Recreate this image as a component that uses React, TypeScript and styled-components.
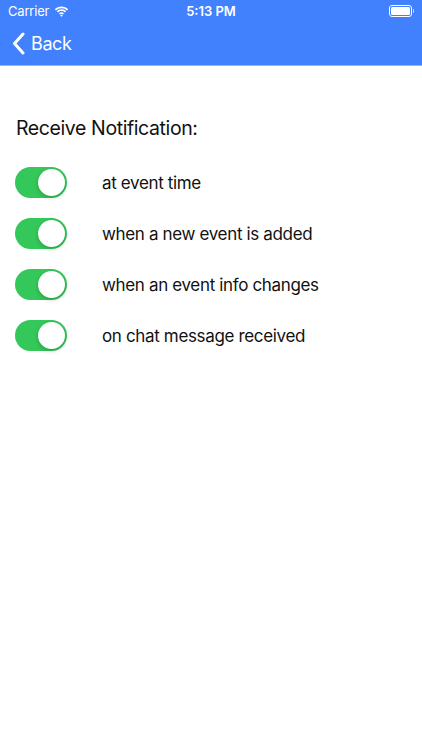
import React, { useState } from "react";
import styled, { createGlobalStyle } from "styled-components";

const GlobalStyle = createGlobalStyle`
  html, body {
    margin: 0;
    padding: 0;
    background: #fff;
  }
  body {
    font-family: "Inter", "Liberation Sans", Arial, sans-serif;
    -webkit-font-smoothing: antialiased;
  }
`;

const Page = styled.div`
  width: 422px;
  min-height: 750px;
  background: #fff;
`;

const Header = styled.div`
  background: #4181fd;
  border-bottom: 1px solid #8fb5fb;
  color: #fff;
`;

const StatusBar = styled.div`
  display: grid;
  grid-template-columns: 1fr auto 1fr;
  align-items: center;
  height: 22px;
  padding: 0 8px;
  font-size: 13px;
`;

const Carrier = styled.div`
  display: flex;
  align-items: center;
  gap: 5px;
  letter-spacing: -0.2px;
`;

const Clock = styled.div`
  font-weight: 600;
  font-size: 13px;
`;

const Battery = styled.div`
  justify-self: end;
  display: flex;
  align-items: center;
`;

const BatteryBody = styled.div`
  width: 19px;
  height: 8px;
  border: 1px solid #fff;
  border-radius: 3px;
  padding: 1px;
  box-sizing: content-box;
  span {
    display: block;
    width: 100%;
    height: 100%;
    background: #fff;
    border-radius: 1.5px;
  }
`;

const BatteryTip = styled.div`
  width: 1.5px;
  height: 4px;
  background: rgba(255, 255, 255, 0.7);
  margin-left: 1px;
  border-radius: 0 1px 1px 0;
`;

const NavBar = styled.div`
  height: 43px;
  display: flex;
  align-items: center;
  padding-left: 12px;
`;

const BackButton = styled.button`
  display: flex;
  align-items: center;
  gap: 6px;
  background: none;
  border: none;
  color: #fff;
  font-family: inherit;
  font-size: 18px;
  letter-spacing: -0.4px;
  padding: 0;
  cursor: pointer;
`;

const Content = styled.div`
  padding: 50px 15px 0;
`;

const Title = styled.div`
  font-size: 19.5px;
  letter-spacing: -0.4px;
  color: #111;
  margin-left: 1px;
  margin-bottom: 27px;
`;

const List = styled.div`
  display: flex;
  flex-direction: column;
  gap: 20px;
`;

const Row = styled.label`
  display: flex;
  align-items: center;
  gap: 35px;
  font-size: 17px;
  letter-spacing: -0.35px;
  color: #111;
`;

const Track = styled.button<{ $on: boolean }>`
  position: relative;
  width: 52px;
  height: 31px;
  border-radius: 16px;
  border: none;
  padding: 0;
  background: ${(p) => (p.$on ? "#34c759" : "#e5e5ea")};
  cursor: pointer;
  flex-shrink: 0;
`;

const Knob = styled.span<{ $on: boolean }>`
  position: absolute;
  top: 2px;
  left: ${(p) => (p.$on ? "23px" : "2px")};
  width: 27px;
  height: 27px;
  border-radius: 50%;
  background: #fff;
  box-shadow: 0 2px 4px rgba(0, 0, 0, 0.18), 0 0 1px rgba(0, 0, 0, 0.1);
`;

const Wifi = () => (
  <svg width="15" height="11" viewBox="0 0 15 11" fill="#fff">
    <path d="M7.5 2.2c2.1 0 4 .8 5.5 2.2l1.2-1.2C12.4 1.4 10 .4 7.5.4S2.6 1.4.8 3.2L2 4.4c1.5-1.4 3.4-2.2 5.5-2.2z" />
    <path d="M7.5 5.1c1.3 0 2.5.5 3.4 1.3l1.2-1.2C10.9 4 9.3 3.3 7.5 3.3S4.1 4 2.9 5.2l1.2 1.2c.9-.8 2.1-1.3 3.4-1.3z" />
    <path d="M7.5 8c.5 0 1 .2 1.3.5l1.2-1.2c-.7-.6-1.6-1-2.5-1s-1.8.4-2.5 1l1.2 1.2c.3-.3.8-.5 1.3-.5zM7.5 10.8l1.3-1.3c-.7-.6-1.9-.6-2.6 0z" />
  </svg>
);

const Chevron = () => (
  <svg width="13" height="23" viewBox="0 0 13 23" fill="none">
    <path d="M11 2L2.5 11.5 11 21" stroke="#fff" strokeWidth="3" strokeLinecap="round" strokeLinejoin="round" />
  </svg>
);

const items = [
  "at event time",
  "when a new event is added",
  "when an event info changes",
  "on chat message received",
];

export default function App() {
  const [flags, setFlags] = useState<boolean[]>([true, true, true, true]);

  const toggle = (i: number) => {
    setFlags((f) => f.map((v, j) => (j === i ? !v : v)));
  };

  return (
    <Page>
      <GlobalStyle />
      <Header>
        <StatusBar>
          <Carrier>
            Carrier <Wifi />
          </Carrier>
          <Clock>5:13 PM</Clock>
          <Battery>
            <BatteryBody>
              <span />
            </BatteryBody>
            <BatteryTip />
          </Battery>
        </StatusBar>
        <NavBar>
          <BackButton>
            <Chevron />
            Back
          </BackButton>
        </NavBar>
      </Header>
      <Content>
        <Title>Receive Notification:</Title>
        <List>
          {items.map((text, i) => (
            <Row key={text}>
              <Track $on={flags[i]} onClick={() => toggle(i)}>
                <Knob $on={flags[i]} />
              </Track>
              {text}
            </Row>
          ))}
        </List>
      </Content>
    </Page>
  );
}
